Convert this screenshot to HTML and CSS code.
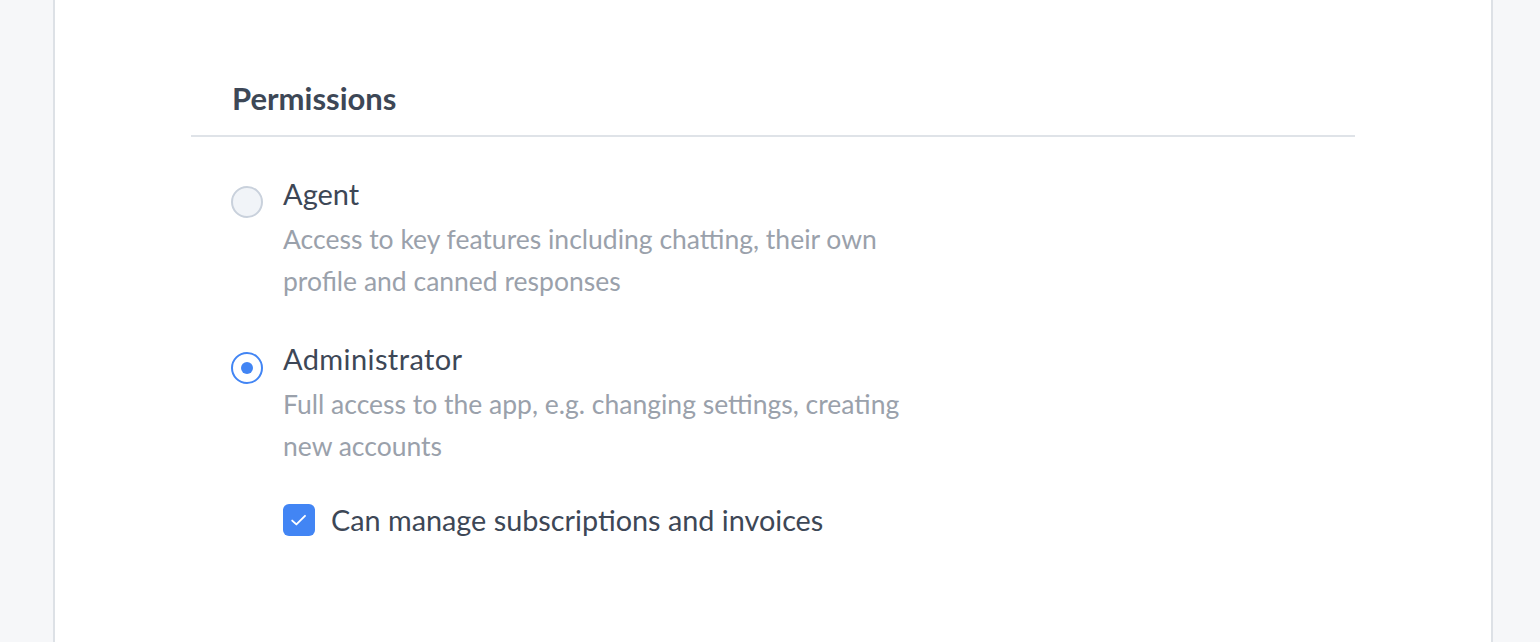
FILE: index.html
```html
<!DOCTYPE html>
<html>
<head>
<meta charset="utf-8">
<link rel="stylesheet" href="styles.css">
</head>
<body>
<div class="page">
  <div class="card">
    <div class="section">
      <div class="section-head">
        <h2 class="section-title">Permissions</h2>
      </div>
      <div class="options">
        <div class="option">
          <span class="radio"></span>
          <div class="option-body">
            <div class="option-title">Agent</div>
            <div class="option-desc">Access to key features including chatting, their own profile and canned responses</div>
          </div>
        </div>
        <div class="option">
          <span class="radio radio-checked"><span class="radio-dot"></span></span>
          <div class="option-body">
            <div class="option-title title-admin">Administrator</div>
            <div class="option-desc">Full access to the app, e.g. changing settings, creating new accounts</div>
            <div class="check-row">
              <span class="checkbox">
                <svg width="18" height="18" viewBox="0 0 18 18"><path d="M2.2 9.6 L6.4 13.4 L15 4.8" fill="none" stroke="#fff" stroke-width="1.9" stroke-linecap="round" stroke-linejoin="round"/></svg>
              </span>
              <span class="check-label">Can manage subscriptions and invoices</span>
            </div>
          </div>
        </div>
      </div>
    </div>
  </div>
</div>
</body>
</html>
```

FILE: styles.css
```css
html, body {
  margin: 0;
  padding: 0;
  height: 100%;
}
body {
  background: #f6f7f9;
  font-family: "Lato", "Noto Sans", sans-serif;
  color: #3d4756;
}
.page {
  display: flex;
  height: 642px;
  padding: 0 47px 0 53px;
}
.card {
  flex: 1;
  background: #fff;
  border-left: 2px solid #dde1e6;
  border-right: 2px solid #dde1e6;
  padding: 0 136px 0 136px;
}
.section {
  padding-top: 78px;
}
.section-head {
  border-bottom: 2px solid #dfe3e8;
  padding: 0 41px 17px;
}
.section-title {
  margin: 0;
  font-size: 31px;
  font-weight: 700;
  line-height: 40px;
  color: #3d4756;
}
.options {
  padding: 37px 40px 0;
  display: flex;
  flex-direction: column;
  gap: 37px;
}
.option {
  display: flex;
  gap: 20px;
}
.radio {
  width: 32px;
  height: 32px;
  box-sizing: border-box;
  border-radius: 50%;
  border: 2px solid #c9d1dc;
  background: #f1f4f8;
  margin-top: 12px;
  flex: none;
  display: flex;
  align-items: center;
  justify-content: center;
}
.radio-checked {
  border-color: #4285f4;
  background: #fff;
  margin-top: 13px;
}
.radio-dot {
  width: 12px;
  height: 12px;
  border-radius: 50%;
  background: #4285f4;
}
.option-title {
  font-size: 29px;
  line-height: 40px;
  color: #3d4756;
}
.title-admin {
  letter-spacing: 0.4px;
}
.option-desc {
  font-size: 26.5px;
  line-height: 42px;
  color: #9aa1ab;
  max-width: 640px;
  margin-top: 4px;
}
.check-row {
  display: flex;
  align-items: center;
  gap: 16px;
  margin-top: 33px;
}
.checkbox {
  width: 32px;
  height: 32px;
  border-radius: 6px;
  background: #4285f4;
  display: flex;
  align-items: center;
  justify-content: center;
  flex: none;
}
.check-label {
  font-size: 28.8px;
  line-height: 40px;
  color: #3d4756;
}
```
